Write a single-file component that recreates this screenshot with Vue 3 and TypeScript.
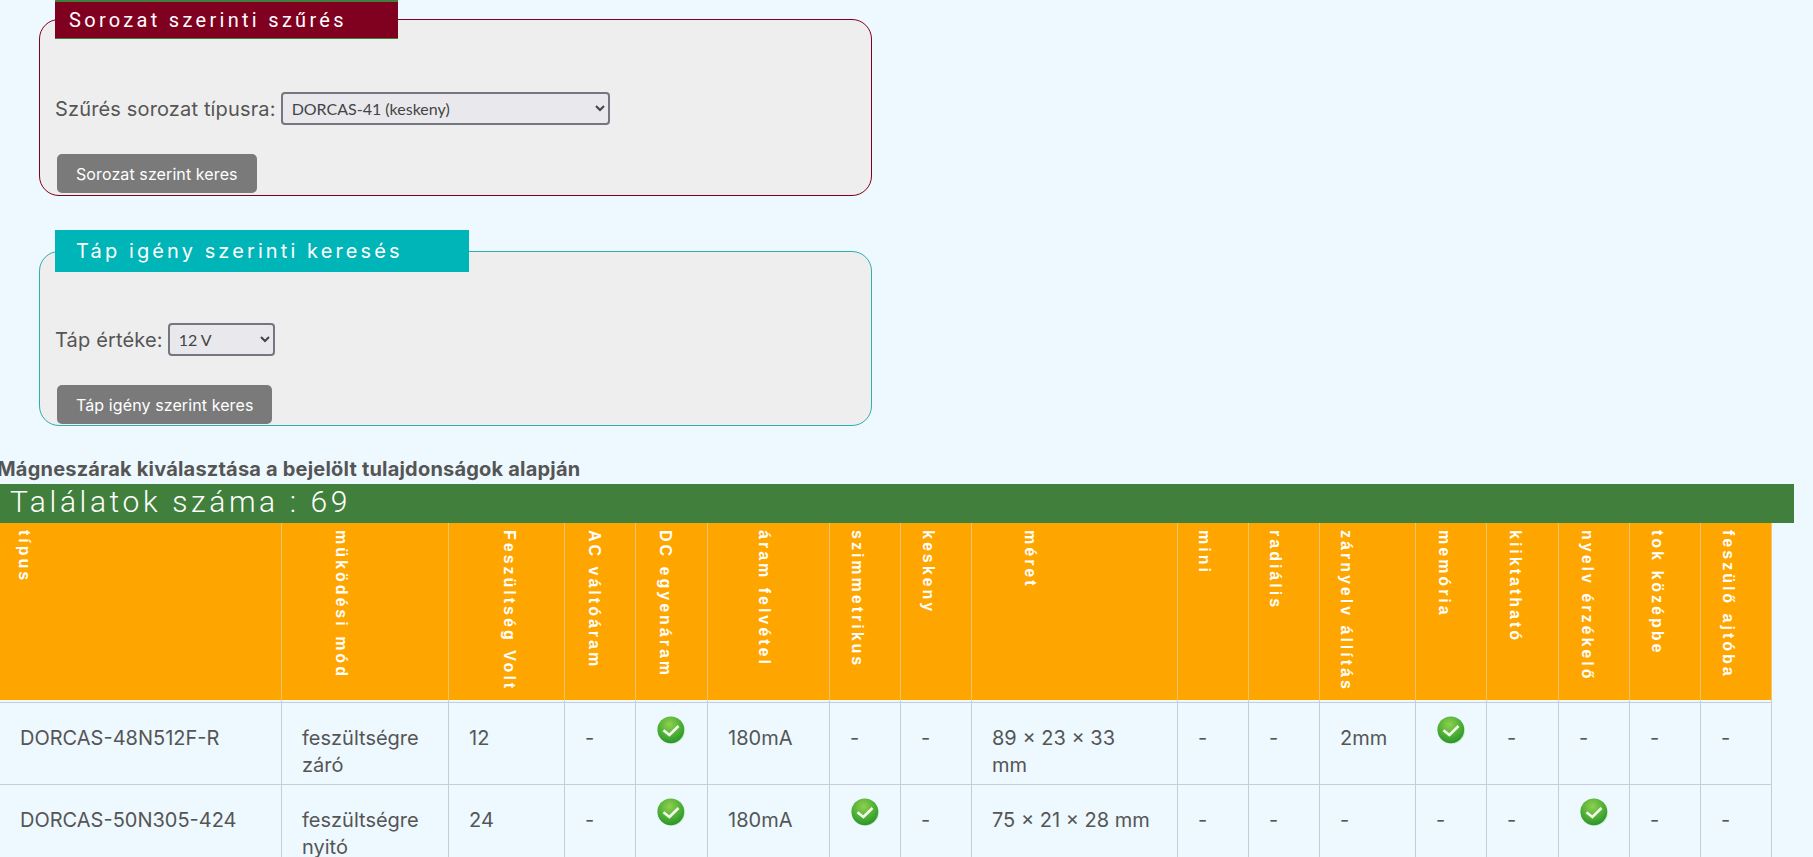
<script setup lang="ts">
import { onMounted, ref } from 'vue';

interface Column {
  label: string;
  width: number;
  inset: number;
}

const CHECK = 'ok';

const columns: Column[] = [
  { label: 'típus', width: 282, inset: 14 },
  { label: 'müködési mód', width: 167, inset: 49 },
  { label: 'Feszültség Volt', width: 116, inset: 50 },
  { label: 'AC váltóáram', width: 71, inset: 19 },
  { label: 'DC egyenáram', width: 72, inset: 19 },
  { label: 'áram felvétel', width: 122, inset: 46 },
  { label: 'szimmetrikus', width: 71, inset: 17 },
  { label: 'keskeny', width: 71, inset: 17 },
  { label: 'méret', width: 206, inset: 48 },
  { label: 'mini', width: 71, inset: 16 },
  { label: 'radiális', width: 71, inset: 16 },
  { label: 'zárnyelv állítás', width: 96, inset: 16 },
  { label: 'memória', width: 71, inset: 18 },
  { label: 'kiiktatható', width: 72, inset: 18 },
  { label: 'nyelv érzékelő', width: 71, inset: 18 },
  { label: 'tok középbe', width: 71, inset: 17 },
  { label: 'feszülő ajtóba', width: 71, inset: 17 },
];

const sample: string[][] = [
  ['DORCAS-48N512F-R', 'feszültségre\nzáró', '12', '-', CHECK, '180mA', '-', '-', '89 x 23 x 33\nmm', '-', '-', '2mm', CHECK, '-', '-', '-', '-'],
  ['DORCAS-50N305-424', 'feszültségre\nnyitó', '24', '-', CHECK, '180mA', CHECK, '-', '75 x 21 x 28 mm', '-', '-', '-', '-', '-', CHECK, '-', '-'],
  ['DORCAS-52AaF', 'feszültségre\nnyitó', '8 - 12', CHECK, CHECK, '700mA', CHECK, '-', '75 x 21 x 28 mm', '-', '-', '2mm', CHECK, '-', '-', '-', '-'],
];

const rows = Array.from({ length: 15 }, (_, i) => sample[(i + 2) % 3]);

const scroller = ref<HTMLElement | null>(null);

onMounted(() => {
  if (scroller.value) scroller.value.scrollTop = 325;
});
</script>

<template>
  <main class="page">
    <fieldset class="box box-series">
      <legend>Sorozat szerinti szűrés</legend>
      <div class="field">
        <label for="series">Szűrés sorozat típusra:</label>
        <select id="series" class="series-select">
          <option>DORCAS-41 (keskeny)</option>
        </select>
      </div>
      <button class="btn">Sorozat szerint keres</button>
    </fieldset>

    <fieldset class="box box-power">
      <legend>Táp igény szerinti keresés</legend>
      <div class="field">
        <label for="power">Táp értéke:</label>
        <select id="power" class="power-select">
          <option>12 V</option>
        </select>
      </div>
      <button class="btn">Táp igény szerint keres</button>
    </fieldset>

    <h2 class="title">Mágneszárak kiválasztása a bejelölt tulajdonságok alapján</h2>
    <div class="hits">Találatok száma :     69</div>

    <div ref="scroller" class="scroller">
      <table>
        <colgroup>
          <col v-for="c in columns" :key="c.label" :style="{ width: c.width + 'px' }" />
        </colgroup>
        <thead>
          <tr>
            <th v-for="c in columns" :key="c.label" :style="{ paddingLeft: c.inset + 'px' }">
              <span>{{ c.label }}</span>
            </th>
          </tr>
        </thead>
        <tbody>
          <tr v-for="(row, r) in rows" :key="r">
            <td v-for="(cell, i) in row" :key="i">
              <div class="cell">
                <svg v-if="cell === CHECK" class="check" viewBox="0 0 28 28" width="28" height="28">
                  <defs>
                    <radialGradient :id="`g${r}-${i}`" cx="0.45" cy="0.3" r="0.8">
                      <stop offset="0" stop-color="#8fd04f" />
                      <stop offset="0.55" stop-color="#4cae34" />
                      <stop offset="1" stop-color="#1d8a2a" />
                    </radialGradient>
                  </defs>
                  <circle cx="14.6" cy="14.6" r="13.4" fill="#bfe8b4" opacity="0.7" />
                  <circle cx="13.8" cy="13.8" r="13.4" :fill="`url(#g${r}-${i})`" />
                  <path d="M6.5 14.2 L12.4 19 L21.5 10" fill="none" stroke="#f2f8ea" stroke-width="2.6" />
                </svg>
                <span v-else class="value">{{ cell }}</span>
              </div>
            </td>
          </tr>
        </tbody>
      </table>
    </div>
  </main>
</template>

<style scoped>
.page {
  font-family: Inter, "Noto Sans", sans-serif;
  color: #555;
}

.box {
  width: 833px;
  height: 196px;
  box-sizing: border-box;
  margin: 0 0 34px 39px;
  padding: 0 15px;
  border: 1px solid #800020;
  border-radius: 20px;
  background: #eee;
}

.box legend {
  padding: 0 14px;
  color: #fff;
  white-space: nowrap;
}

.box-series legend {
  width: 343px;
  height: 39px;
  box-sizing: border-box;
  background: #800020;
  border-top: 2px solid #40803c;
  border-bottom: 1px solid #40803c;
  font: 400 20px/36px Roboto, sans-serif;
  letter-spacing: 3.3px;
}

.box-power {
  border-color: #2fb0ae;
}

.box-power legend {
  width: 414px;
  height: 42px;
  box-sizing: border-box;
  padding: 0 21px;
  background: #00b5b8;
  font: 400 20px/42px Inter, sans-serif;
  letter-spacing: 3.1px;
}

.field {
  display: flex;
  align-items: center;
  gap: 5px;
  margin-top: 53px;
  font-size: 20px;
  letter-spacing: 0.15px;
}

.box-power .field {
  margin-top: 51px;
}

select {
  height: 33px;
  font: 400 16px Lato, sans-serif;
  color: #444;
  background-color: #e9e9ed;
  border: 2px solid #767680;
  border-radius: 4px;
  padding-left: 5px;
}

.series-select {
  width: 329px;
}

.power-select {
  width: 107px;
}

.btn {
  display: block;
  height: 39px;
  margin: 29px 0 0 2px;
  padding: 0 19px;
  border: 0;
  border-radius: 5px;
  background: #7a7a7a;
  color: #fff;
  font: 400 16px Inter, sans-serif;
  letter-spacing: 0.1px;
}

.title {
  margin: 0 0 0 -3px;
  height: 24px;
  font-size: 20px;
  font-weight: 700;
  line-height: 24px;
  letter-spacing: 0.2px;
  white-space: nowrap;
  transform: translateY(-3px);
}

.hits {
  width: 1794px;
  height: 39px;
  padding-left: 10px;
  box-sizing: border-box;
  background: #40803c;
  color: #fff;
  font: 300 30px/36px Roboto, sans-serif;
  letter-spacing: 3.6px;
  white-space: pre;
}

.scroller {
  width: 1794px;
  height: 347px;
  overflow-y: scroll;
}

.scroller::-webkit-scrollbar {
  width: 22px;
}

.scroller::-webkit-scrollbar-track {
  background: #f1f1f1;
}

.scroller::-webkit-scrollbar-thumb {
  background: #c8c8c8;
}

table {
  width: 1772px;
  table-layout: fixed;
  border-collapse: separate;
  border-spacing: 0;
}

thead th {
  position: sticky;
  top: 0;
  z-index: 2;
  height: 177px;
  box-sizing: border-box;
  padding: 7px 0 0;
  text-align: left;
  vertical-align: top;
  background: #ffa500;
  border-right: 1px solid #f0c36e;
}

thead span {
  display: block;
  writing-mode: vertical-rl;
  color: #fff;
  font: 700 16px/20px "Liberation Sans", sans-serif;
  letter-spacing: 3px;
  white-space: nowrap;
}

tbody td {
  height: 73px;
  box-sizing: border-box;
  padding: 13px 0 0 20px;
  vertical-align: top;
  border-right: 1px solid #c5cdd8;
  border-bottom: 1px solid #c5cdd8;
}

.cell {
  height: 59px;
}

.value {
  display: block;
  margin-top: 9px;
  font-size: 20px;
  line-height: 27px;
  white-space: pre-line;
}

.check {
  display: block;
  margin-left: 1px;
}
</style>

<style>
html,
body {
  overflow: hidden;
  background: #edf9ff;
}
</style>
